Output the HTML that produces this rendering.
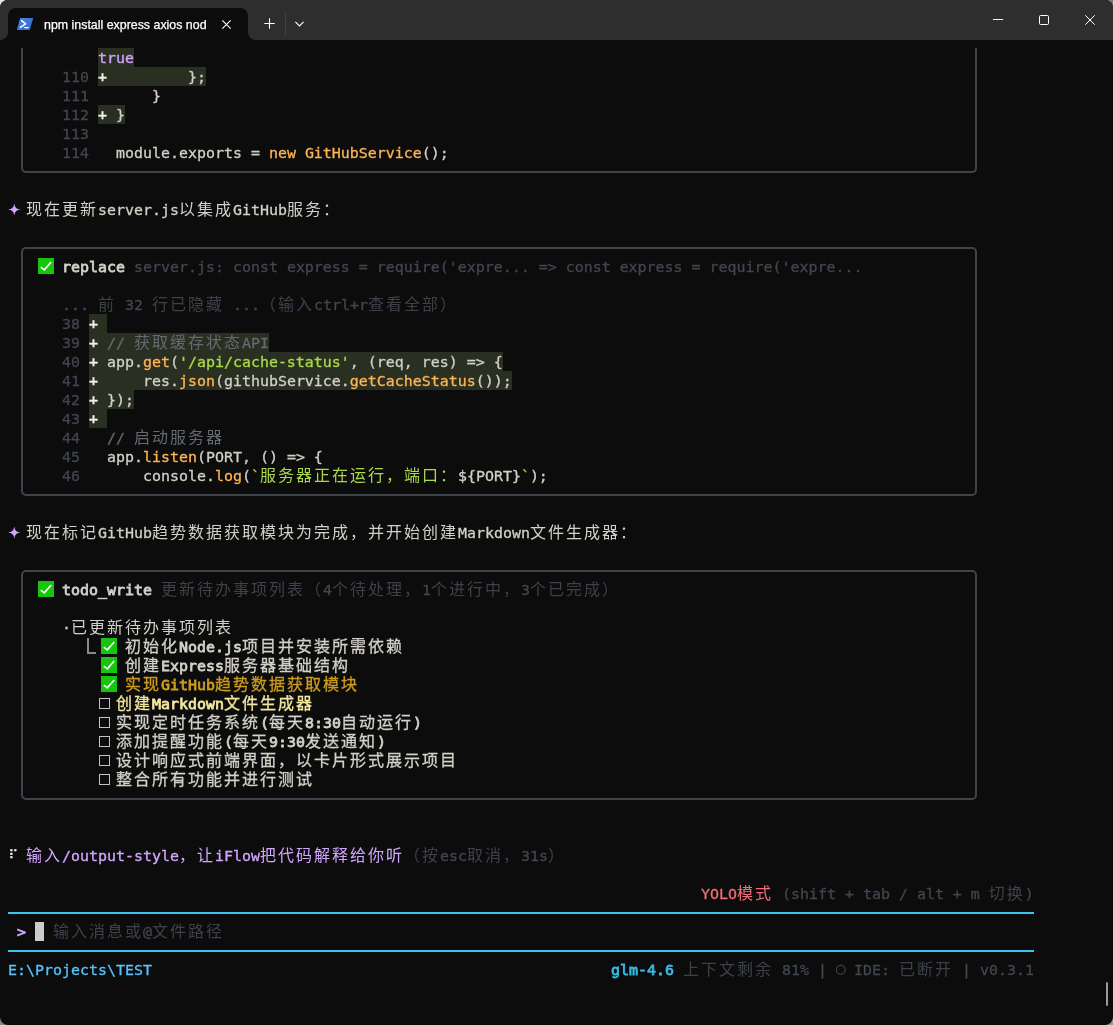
<!DOCTYPE html>
<html lang="zh-CN">
<head>
<meta charset="utf-8">
<title>npm install express axios nod</title>
<style>
html,body{margin:0;padding:0}
html{background:#0c0c0c}
body{width:1113px;height:1025px;position:relative;overflow:hidden;background:#0c0c0c;
 font-family:"DejaVu Sans Mono","Liberation Mono","Noto Sans CJK SC",monospace;font-size:14.95px;line-height:19px;color:#bfbdb6}
.corner{position:absolute;width:10px;height:10px}
#win{position:absolute;left:0;top:0;width:1113px;height:1025px;background:#0c0c0c;border-radius:8px;overflow:hidden}
#tb{position:absolute;left:0;top:0;width:1113px;height:40px;background:#2e2e2e}
#tab{position:absolute;left:8px;top:8px;width:240px;height:32px;background:#0c0c0c;border-radius:8px 8px 0 0}
#tab:before,#tab:after{content:"";position:absolute;bottom:0;width:8px;height:8px;background:radial-gradient(circle at 0 0,#2e2e2e 7.5px,#0c0c0c 8.5px)}
#tab:before{left:-8px}
#tab:after{right:-8px;background:radial-gradient(circle at 100% 0,#2e2e2e 7.5px,#0c0c0c 8.5px)}
#ttl{position:absolute;left:43.5px;top:17px;font:12.4px/17px "Liberation Sans","Noto Sans CJK SC",sans-serif;color:#fff;white-space:pre;-webkit-text-stroke:0.25px;will-change:transform}
svg.ic{position:absolute;overflow:visible}
.row{position:absolute;left:8px;height:19px;white-space:pre;will-change:transform}
.sg{position:absolute;top:1px;height:19px;white-space:pre;-webkit-text-stroke:0.3px}
.c{font-family:"Liberation Mono","Noto Sans CJK SC",sans-serif;font-size:16px;letter-spacing:2px;line-height:0;font-weight:normal;-webkit-text-stroke:0}
.hl{position:absolute;height:19px;background:#293022}
.f{color:#d2d0c8}.pl{color:#f0efea;-webkit-text-stroke:0.5px}.g{color:#424650}
.g .c{color:#3d414a}.cm{color:#646a71}.p{color:#d2a6ff}.y{color:#ffb454}
.st{color:#aad94c}
.bd{font-weight:normal;-webkit-text-stroke:0.8px}
.bd .c{-webkit-text-stroke:0.3px}
.sym{font-family:"DejaVu Sans","DejaVu Sans Mono",sans-serif;line-height:0}
.br{font-size:12.5px;position:relative;left:0.5px;top:-2px;color:#ececec}
.ci{font-size:12.5px;position:relative;left:-1px;top:-2px}
.b{color:#39bae6}.lb{color:#59c2ff}.rd{color:#f26d78}
.gold{color:#cc9c1c}.pale{color:#f2e79e}
.box{position:absolute;border:2px solid #3f434c;border-radius:5px}
.chk{position:absolute}
.ebox{position:absolute;width:9px;height:9px;border:1.5px solid #c2c2c2}
.ell{position:absolute;width:7px;height:14px;border-left:2px solid #8a8a8a;border-bottom:2px solid #8a8a8a}
.cur{position:absolute;width:9px;height:19px;background:#cccccc}
.ln{position:absolute;left:8px;width:1026px;height:2px;background:#3cc4f1}
#sb{position:absolute;left:1106px;top:982px;width:2px;height:24px;background:#9a9a9a;border-radius:1px}
</style>
</head>
<body>
<div class="corner" style="left:0;top:0;background:#e4e4e4"></div><div class="corner" style="right:0;top:0;background:#767676"></div><div class="corner" style="left:0;bottom:0;background:#878787"></div><div class="corner" style="right:0;bottom:0;background:#989898"></div>
<div id="win">
<div id="tb">
 <div id="tab"></div>
 <div id="ttl">npm install express axios nod</div>
 <svg class="ic" style="left:16px;top:17px" width="18" height="14" viewBox="0 0 18 14">
  <defs><linearGradient id="psg" x1="0" y1="0" x2="1" y2="1"><stop offset="0" stop-color="#4a86e8"/><stop offset="1" stop-color="#2f66c4"/></linearGradient></defs>
  <path d="M4.2 1 H17.2 L13.8 13 H0.8 Z" fill="url(#psg)"/>
  <path d="M5.6 3.6 L9.6 6.9 L4.4 10.4" fill="none" stroke="#fff" stroke-width="1.5" stroke-linecap="round" stroke-linejoin="round"/>
  <path d="M8.8 10.6 H12.2" fill="none" stroke="#fff" stroke-width="1.4" stroke-linecap="round"/>
 </svg>
 <svg class="ic" style="left:222px;top:19.5px" width="9" height="9" viewBox="0 0 9 9"><path d="M0.3 0.3 L8.7 8.7 M8.7 0.3 L0.3 8.7" stroke="#fff" stroke-width="1.1" fill="none"/></svg>
 <svg class="ic" style="left:264px;top:18px" width="11" height="11" viewBox="0 0 11 11"><path d="M5.5 0.3 V10.7 M0.3 5.5 H10.7" stroke="#fff" stroke-width="1.1" fill="none"/></svg>
 <div style="position:absolute;left:285px;top:12px;width:1px;height:24px;background:#414141"></div>
 <svg class="ic" style="left:295px;top:21px" width="9" height="6" viewBox="0 0 9 6"><path d="M0.4 0.8 L4.5 4.9 L8.6 0.8" stroke="#fff" stroke-width="1.1" fill="none"/></svg>
 <svg class="ic" style="left:993px;top:19px" width="10" height="1" viewBox="0 0 10 1"><rect width="10" height="1" fill="#fff"/></svg>
 <svg class="ic" style="left:1039px;top:15px" width="10" height="10" viewBox="0 0 10 10"><rect x="0.5" y="0.5" width="9" height="9" rx="1" fill="none" stroke="#fff" stroke-width="1"/></svg>
 <svg class="ic" style="left:1085px;top:15px" width="10" height="10" viewBox="0 0 10 10"><path d="M0.3 0.3 L9.7 9.7 M9.7 0.3 L0.3 9.7" stroke="#fff" stroke-width="1" fill="none"/></svg>
</div>
<div class="hl" style="left:98px;top:48px;width:36px"></div>
<div class="hl" style="left:98px;top:67px;width:108px"></div>
<div class="hl" style="left:98px;top:105px;width:27px"></div>
<div class="hl" style="left:89px;top:314px;width:18px"></div>
<div class="hl" style="left:89px;top:333px;width:180px"></div>
<div class="hl" style="left:89px;top:352px;width:414px"></div>
<div class="hl" style="left:89px;top:371px;width:423px"></div>
<div class="hl" style="left:89px;top:390px;width:45px"></div>
<div class="hl" style="left:89px;top:409px;width:18px"></div>
<div class="row" style="top:48px"><span class="sg" style="left:90px"><span class="p">true</span></span></div>
<div class="row" style="top:67px"><span class="sg" style="left:54px"><span class="g">110</span></span><span class="sg" style="left:90px"><span class="pl">+</span><span class="f">         };</span></span></div>
<div class="row" style="top:86px"><span class="sg" style="left:54px"><span class="g">111</span></span><span class="sg" style="left:144px"><span class="f">}</span></span></div>
<div class="row" style="top:105px"><span class="sg" style="left:54px"><span class="g">112</span></span><span class="sg" style="left:90px"><span class="pl">+</span><span class="f"> }</span></span></div>
<div class="row" style="top:124px"><span class="sg" style="left:54px"><span class="g">113</span></span></div>
<div class="row" style="top:143px"><span class="sg" style="left:54px"><span class="g">114</span></span><span class="sg" style="left:108px"><span class="f">module.exports = </span><span class="y">new</span><span class="f"> </span><span class="y">GitHubService</span><span class="f">();</span></span></div>
<div class="row" style="top:200px"><span class="sg" style="left:0px"><span class="p sym">✦</span></span><span class="sg" style="left:18px"><span class="f"><span class="c">现在更新</span>server.js<span class="c">以集成</span>GitHub<span class="c">服务：</span></span></span></div>
<div class="row" style="top:257px"><span class="sg" style="left:54px"><span class="f bd">replace</span></span><span class="sg" style="left:126px"><span class="g">server.js: const express = require('expre... =&gt; const express = require('expre...</span></span></div>
<div class="row" style="top:295px"><span class="sg" style="left:54px"><span class="g">... <span class="c">前</span> 32 <span class="c">行已隐藏</span> ...<span class="c">（输入</span>ctrl+r<span class="c">查看全部）</span></span></span></div>
<div class="row" style="top:314px"><span class="sg" style="left:54px"><span class="g">38</span></span><span class="sg" style="left:81px"><span class="pl">+</span></span></div>
<div class="row" style="top:333px"><span class="sg" style="left:54px"><span class="g">39</span></span><span class="sg" style="left:81px"><span class="pl">+</span><span class="f"> </span><span class="cm">// <span class="c">获取缓存状态</span>API</span></span></div>
<div class="row" style="top:352px"><span class="sg" style="left:54px"><span class="g">40</span></span><span class="sg" style="left:81px"><span class="pl">+</span><span class="f"> app.</span><span class="y">get</span><span class="f">(</span><span class="st">'/api/cache-status'</span><span class="f">, (req, res) =&gt; {</span></span></div>
<div class="row" style="top:371px"><span class="sg" style="left:54px"><span class="g">41</span></span><span class="sg" style="left:81px"><span class="pl">+</span><span class="f">     res.</span><span class="y">json</span><span class="f">(githubService.</span><span class="y">getCacheStatus</span><span class="f">());</span></span></div>
<div class="row" style="top:390px"><span class="sg" style="left:54px"><span class="g">42</span></span><span class="sg" style="left:81px"><span class="pl">+</span><span class="f"> });</span></span></div>
<div class="row" style="top:409px"><span class="sg" style="left:54px"><span class="g">43</span></span><span class="sg" style="left:81px"><span class="pl">+</span></span></div>
<div class="row" style="top:428px"><span class="sg" style="left:54px"><span class="g">44</span></span><span class="sg" style="left:99px"><span class="cm">// <span class="c">启动服务器</span></span></span></div>
<div class="row" style="top:447px"><span class="sg" style="left:54px"><span class="g">45</span></span><span class="sg" style="left:99px"><span class="f">app.</span><span class="y">listen</span><span class="f">(PORT, () =&gt; {</span></span></div>
<div class="row" style="top:466px"><span class="sg" style="left:54px"><span class="g">46</span></span><span class="sg" style="left:99px"><span class="f">    console.</span><span class="y">log</span><span class="f">(</span><span class="st">`<span class="c">服务器正在运行，端口：</span></span><span class="f">${PORT}</span><span class="st">`</span><span class="f">);</span></span></div>
<div class="row" style="top:523px"><span class="sg" style="left:0px"><span class="p sym">✦</span></span><span class="sg" style="left:18px"><span class="f"><span class="c">现在标记</span>GitHub<span class="c">趋势数据获取模块为完成，并开始创建</span>Markdown<span class="c">文件生成器：</span></span></span></div>
<div class="row" style="top:580px"><span class="sg" style="left:54px"><span class="f bd">todo_write</span></span><span class="sg" style="left:153px"><span class="g"><span class="c">更新待办事项列表（</span>4<span class="c">个待处理，</span>1<span class="c">个进行中，</span>3<span class="c">个已完成）</span></span></span></div>
<div class="row" style="top:618px"><span class="sg" style="left:54px"><span class="f">·<span class="c">已更新待办事项列表</span></span></span></div>
<div class="row" style="top:637px"><span class="sg" style="left:117px"><span class="f bd"><span class="c">初始化</span>Node.js<span class="c">项目并安装所需依赖</span></span></span></div>
<div class="row" style="top:656px"><span class="sg" style="left:117px"><span class="f bd"><span class="c">创建</span>Express<span class="c">服务器基础结构</span></span></span></div>
<div class="row" style="top:675px"><span class="sg" style="left:117px"><span class="gold bd"><span class="c">实现</span>GitHub<span class="c">趋势数据获取模块</span></span></span></div>
<div class="row" style="top:694px"><span class="sg" style="left:108px"><span class="pale bd"><span class="c">创建</span>Markdown<span class="c">文件生成器</span></span></span></div>
<div class="row" style="top:713px"><span class="sg" style="left:108px"><span class="f bd"><span class="c">实现定时任务系统</span>(<span class="c">每天</span>8:30<span class="c">自动运行</span>)</span></span></div>
<div class="row" style="top:732px"><span class="sg" style="left:108px"><span class="f bd"><span class="c">添加提醒功能</span>(<span class="c">每天</span>9:30<span class="c">发送通知</span>)</span></span></div>
<div class="row" style="top:751px"><span class="sg" style="left:108px"><span class="f bd"><span class="c">设计响应式前端界面，以卡片形式展示项目</span></span></span></div>
<div class="row" style="top:770px"><span class="sg" style="left:108px"><span class="f bd"><span class="c">整合所有功能并进行测试</span></span></span></div>
<div class="row" style="top:846px"><span class="sg" style="left:0px"><span class="f sym br">⠏</span></span><span class="sg" style="left:18px"><span class="p"><span class="c">输入</span>/output-style<span class="c">，让</span>iFlow<span class="c">把代码解释给你听</span></span><span class="g"><span class="c">（按</span>esc<span class="c">取消，</span>31s<span class="c">）</span></span></span></div>
<div class="row" style="top:884px"><span class="sg" style="left:693px"><span class="rd">YOLO<span class="c">模式</span></span><span class="g"> (shift + tab / alt + m <span class="c">切换</span>)</span></span></div>
<div class="row" style="top:922px"><span class="sg" style="left:9px"><span class="p bd">&gt;</span></span><span class="sg" style="left:45px"><span class="g"><span class="c">输入消息或</span>@<span class="c">文件路径</span></span></span></div>
<div class="row" style="top:960px"><span class="sg" style="left:0px"><span class="lb">E:\Projects\TEST</span></span><span class="sg" style="left:603px"><span class="b bd">glm-4.6</span><span class="g"> <span class="c">上下文剩余</span> 81% | </span></span><span class="sg" style="left:828px"><span class="g sym ci">○</span></span><span class="sg" style="left:846px"><span class="g">IDE: <span class="c">已断开</span> | v0.3.1</span></span></div>
<div class="box" style="left:21px;top:48px;width:952px;height:123px;border-top:none;border-radius:0 0 5px 5px"></div>
<div class="box" style="left:21px;top:247px;width:952px;height:245px"></div>
<div class="box" style="left:21px;top:570px;width:952px;height:226px"></div>
<svg class="chk" style="left:38px;top:258px" width="16" height="16" viewBox="0 0 16 16"><rect width="16" height="16" fill="#16c60c"/><path d="M2.8 9.2 L6.3 11.9 L13.2 4.0" fill="none" stroke="#fff" stroke-width="1.6"/></svg>
<svg class="chk" style="left:38px;top:581px" width="16" height="16" viewBox="0 0 16 16"><rect width="16" height="16" fill="#16c60c"/><path d="M2.8 9.2 L6.3 11.9 L13.2 4.0" fill="none" stroke="#fff" stroke-width="1.6"/></svg>
<svg class="chk" style="left:101px;top:638px" width="16" height="16" viewBox="0 0 16 16"><rect width="16" height="16" fill="#16c60c"/><path d="M2.8 9.2 L6.3 11.9 L13.2 4.0" fill="none" stroke="#fff" stroke-width="1.6"/></svg>
<svg class="chk" style="left:101px;top:657px" width="16" height="16" viewBox="0 0 16 16"><rect width="16" height="16" fill="#16c60c"/><path d="M2.8 9.2 L6.3 11.9 L13.2 4.0" fill="none" stroke="#fff" stroke-width="1.6"/></svg>
<svg class="chk" style="left:101px;top:676px" width="16" height="16" viewBox="0 0 16 16"><rect width="16" height="16" fill="#16c60c"/><path d="M2.8 9.2 L6.3 11.9 L13.2 4.0" fill="none" stroke="#fff" stroke-width="1.6"/></svg>
<div class="ebox" style="left:99px;top:698px"></div>
<div class="ebox" style="left:99px;top:717px"></div>
<div class="ebox" style="left:99px;top:736px"></div>
<div class="ebox" style="left:99px;top:755px"></div>
<div class="ebox" style="left:99px;top:774px"></div>
<div class="ell" style="left:87px;top:638px"></div>
<div class="cur" style="left:35px;top:922px"></div>
<div class="ln" style="top:912px"></div>
<div class="ln" style="top:950px"></div>
<div id="sb"></div>
</div>
</body>
</html>
